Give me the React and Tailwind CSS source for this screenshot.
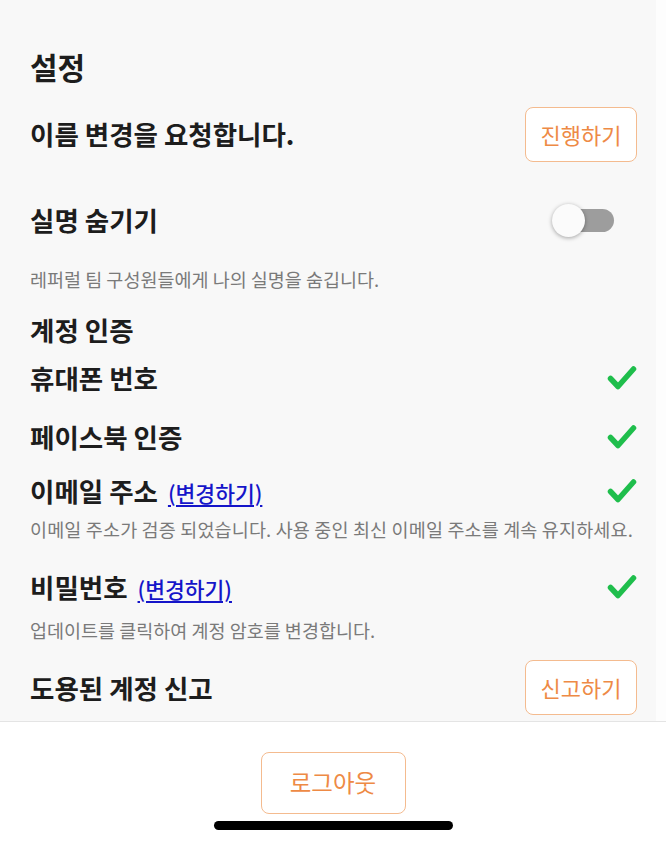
import React from "react";

const Check = () => (
  <svg width="30" height="26" viewBox="0 0 30 26" className="shrink-0">
    <path d="M3.5 13.5 L11 21.5 L26.5 4" fill="none" stroke="#1fbe4c" strokeWidth="5.5" strokeLinecap="round" strokeLinejoin="round" />
  </svg>
);

const OrangeBtn = ({ children }) => (
  <button className="w-[112px] h-[55px] rounded-[8px] border-[1.5px] border-[#f4bb8f] bg-white text-[22px] text-[#ee8a45] flex items-center justify-center">
    {children}
  </button>
);

const Link = ({ children }) => (
  <span className="ml-[10px] text-[21.5px] font-medium text-[#1515c9] underline underline-offset-[3px] decoration-[1.5px]">{children}</span>
);

const label = "text-[26.5px] font-semibold";
const desc = "text-[18.5px] text-[#7a7a7a] whitespace-nowrap";

export default function App() {
  return (
    <div
      className="w-[666px] h-[844px] flex flex-col bg-white overflow-hidden"
      style={{ fontFamily: '"Noto Sans CJK KR", "Noto Sans", sans-serif' }}
    >
      <div className="h-[721px] flex bg-[#f8f8f8] overflow-hidden">
        <div className="flex-1 flex flex-col pl-[30px] pr-[19px] text-[#1d1d1d]">
          <div className="mt-[44px] h-[44px] flex items-center text-[30px] font-bold">설정</div>

          <div className="mt-[19px] h-[54px] flex items-center justify-between">
            <span className={label}>이름 변경을 요청합니다.</span>
            <OrangeBtn>진행하기</OrangeBtn>
          </div>

          <div className="mt-[35px] h-[48px] flex items-center justify-between">
            <span className={label}>실명 숨기기</span>
            <div className="relative w-[62px] h-[34px] mr-[23px] flex items-center">
              <div className="absolute right-0 w-[46px] h-[23px] rounded-full bg-[#9d9d9d]" />
              <div className="absolute left-0 w-[33px] h-[33px] rounded-full bg-[#fbfbfb] shadow-[0_1px_4px_rgba(0,0,0,0.35)]" />
            </div>
          </div>

          <div className={"mt-[24px] h-[24px] flex items-center " + desc}>레퍼럴 팀 구성원들에게 나의 실명을 숨깁니다.</div>

          <div className={"mt-[22px] h-[32px] flex items-center " + label}>계정 인증</div>

          <div className="mt-[14px] h-[36px] flex items-center justify-between">
            <span className={label}>휴대폰 번호</span>
            <Check />
          </div>

          <div className="mt-[23px] h-[36px] flex items-center justify-between">
            <span className={label}>페이스북 인증</span>
            <Check />
          </div>

          <div className="mt-[18px] h-[36px] flex items-center justify-between">
            <span className="flex items-baseline">
              <span className={label}>이메일 주소</span>
              <Link>(변경하기)</Link>
            </span>
            <Check />
          </div>

          <div className={"mt-[9px] h-[24px] flex items-center tracking-[0.15px] " + desc}>이메일 주소가 검증 되었습니다. 사용 중인 최신 이메일 주소를 계속 유지하세요.</div>

          <div className="mt-[27px] h-[36px] flex items-center justify-between">
            <span className="flex items-baseline">
              <span className={label}>비밀번호</span>
              <Link>(변경하기)</Link>
            </span>
            <Check />
          </div>

          <div className={"mt-[14px] h-[24px] flex items-center " + desc}>업데이트를 클릭하여 계정 암호를 변경합니다.</div>

          <div className="mt-[17px] h-[55px] flex items-center justify-between">
            <span className={label}>도용된 계정 신고</span>
            <OrangeBtn>신고하기</OrangeBtn>
          </div>
        </div>
        <div className="w-[10px] bg-[#fdfdfd]" />
      </div>

      <div className="flex-1 border-t border-[#e4e4e4] bg-white flex flex-col items-center pt-[30px]">
        <button className="w-[145px] h-[62px] rounded-[8px] border-[1.5px] border-[#f4bb8f] bg-white text-[23.5px] text-[#ee8a45] flex items-center justify-center">
          로그아웃
        </button>
        <div className="mt-[7px] w-[239px] h-[9px] rounded-full bg-black" />
      </div>
    </div>
  );
}
